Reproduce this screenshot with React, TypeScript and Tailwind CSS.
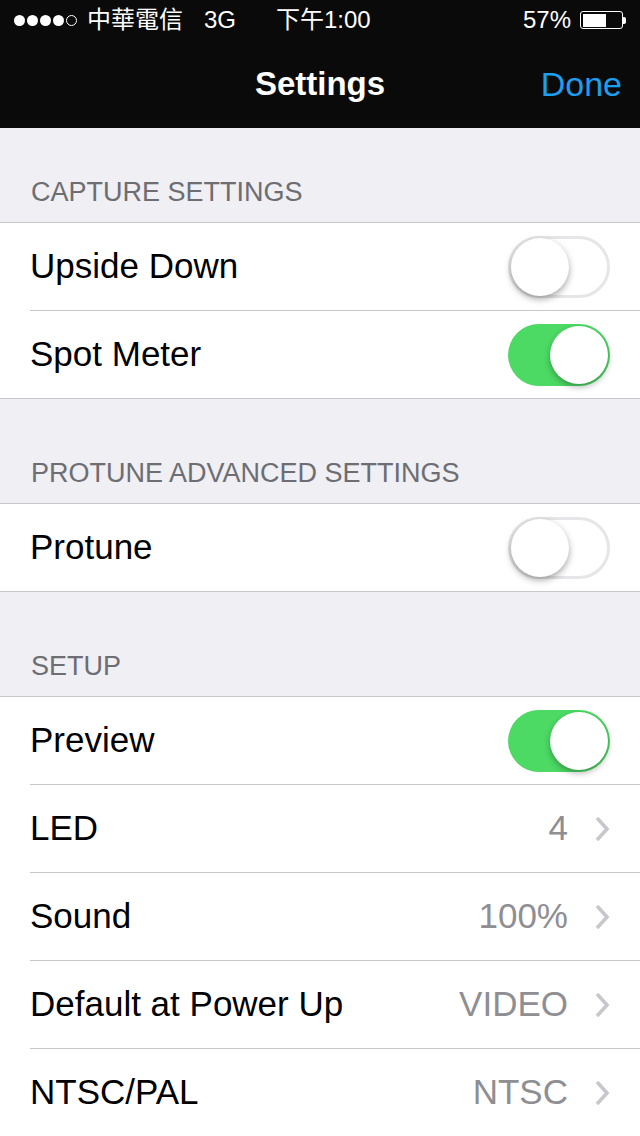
import React from "react";

const font = { fontFamily: '"Liberation Sans", "Noto Sans CJK TC", Arial, sans-serif' };

function Toggle({ on }: { on: boolean }) {
  if (on) {
    return (
      <div className="relative w-[102px] h-[62px] rounded-full bg-[#4cd964] shrink-0">
        <div className="absolute right-[2px] top-[2px] w-[58px] h-[58px] rounded-full bg-white shadow-[0_3px_6px_rgba(0,0,0,0.3)]" />
      </div>
    );
  }
  return (
    <div className="relative w-[102px] h-[62px] rounded-full bg-white border-[3px] border-[#e6e6e9] shrink-0">
      <div className="absolute left-[0px] top-[-1px] w-[58px] h-[58px] rounded-full bg-white shadow-[0_3px_7px_rgba(0,0,0,0.35)]" />
    </div>
  );
}

function Chevron() {
  return (
    <svg width="16" height="26" viewBox="0 0 16 26" className="shrink-0">
      <path d="M3 2 L13 13 L3 24" fill="none" stroke="#c7c7cc" strokeWidth="3.6" strokeLinecap="butt" strokeLinejoin="miter" />
    </svg>
  );
}

type Row = { label: string; toggle?: boolean; value?: string };

function Section({ title, rows, headerH }: { title: string; rows: Row[]; headerH: string }) {
  return (
    <div>
      <div className={`flex items-end pl-[31px] pb-[14px] ${headerH}`}>
        <span className="text-[27px] leading-[32px] text-[#6d6d72]">{title}</span>
      </div>
      <div className="bg-white border-t border-b border-[#c8c7cc]">
        {rows.map((r, i) => (
          <div key={r.label} className="pl-[30px]">
            <div
              className={`flex items-center h-[87px] pr-[30px] ${
                i < rows.length - 1 ? "border-b border-[#c8c7cc] h-[88px]" : ""
              }`}
            >
              <span className="flex-1 text-[35px] text-black">{r.label}</span>
              {r.toggle !== undefined && <Toggle on={r.toggle} />}
              {r.value !== undefined && (
                <div className="flex items-center gap-[26px]">
                  <span className="text-[35px] text-[#8e8e93]">{r.value}</span>
                  <Chevron />
                </div>
              )}
            </div>
          </div>
        ))}
      </div>
    </div>
  );
}

export default function App() {
  return (
    <div className="w-[640px] h-[1136px] overflow-hidden bg-[#efeff4]" style={font}>
      <div className="bg-[#0a0a0a] text-white">
        <div className="h-[40px] flex items-center px-[14px] text-[24px] relative">
          <div className="flex items-center gap-[2px]">
            {[0, 1, 2, 3].map((i) => (
              <span key={i} className="w-[11px] h-[11px] rounded-full bg-white" />
            ))}
            <span className="w-[11px] h-[11px] rounded-full border border-white" />
          </div>
          <span className="ml-[10px]">中華電信</span>
          <span className="ml-[21px]">3G</span>
          <span className="absolute left-[276px]">下午1:00</span>
          <div className="ml-auto flex items-center">
            <span className="mr-[9px]">57%</span>
            <div className="w-[43px] h-[18px] border-[1.5px] border-white rounded-[3px] p-[1.5px]">
              <div className="w-[23px] h-full bg-white" />
            </div>
            <div className="w-[3px] h-[7px] bg-white rounded-r-[2px]" />
          </div>
        </div>
        <div className="h-[88px] flex items-center justify-center relative">
          <span className="text-[33px] font-bold">Settings</span>
          <span className="absolute right-[18px] text-[34px] text-[#1c9ff0]">Done</span>
        </div>
      </div>
      <Section
        title="CAPTURE SETTINGS"
        headerH="h-[94px]"
        rows={[
          { label: "Upside Down", toggle: false },
          { label: "Spot Meter", toggle: true },
        ]}
      />
      <Section
        title="PROTUNE ADVANCED SETTINGS"
        headerH="h-[104px]"
        rows={[{ label: "Protune", toggle: false }]}
      />
      <Section
        title="SETUP"
        headerH="h-[104px]"
        rows={[
          { label: "Preview", toggle: true },
          { label: "LED", value: "4" },
          { label: "Sound", value: "100%" },
          { label: "Default at Power Up", value: "VIDEO" },
          { label: "NTSC/PAL", value: "NTSC" },
        ]}
      />
    </div>
  );
}
